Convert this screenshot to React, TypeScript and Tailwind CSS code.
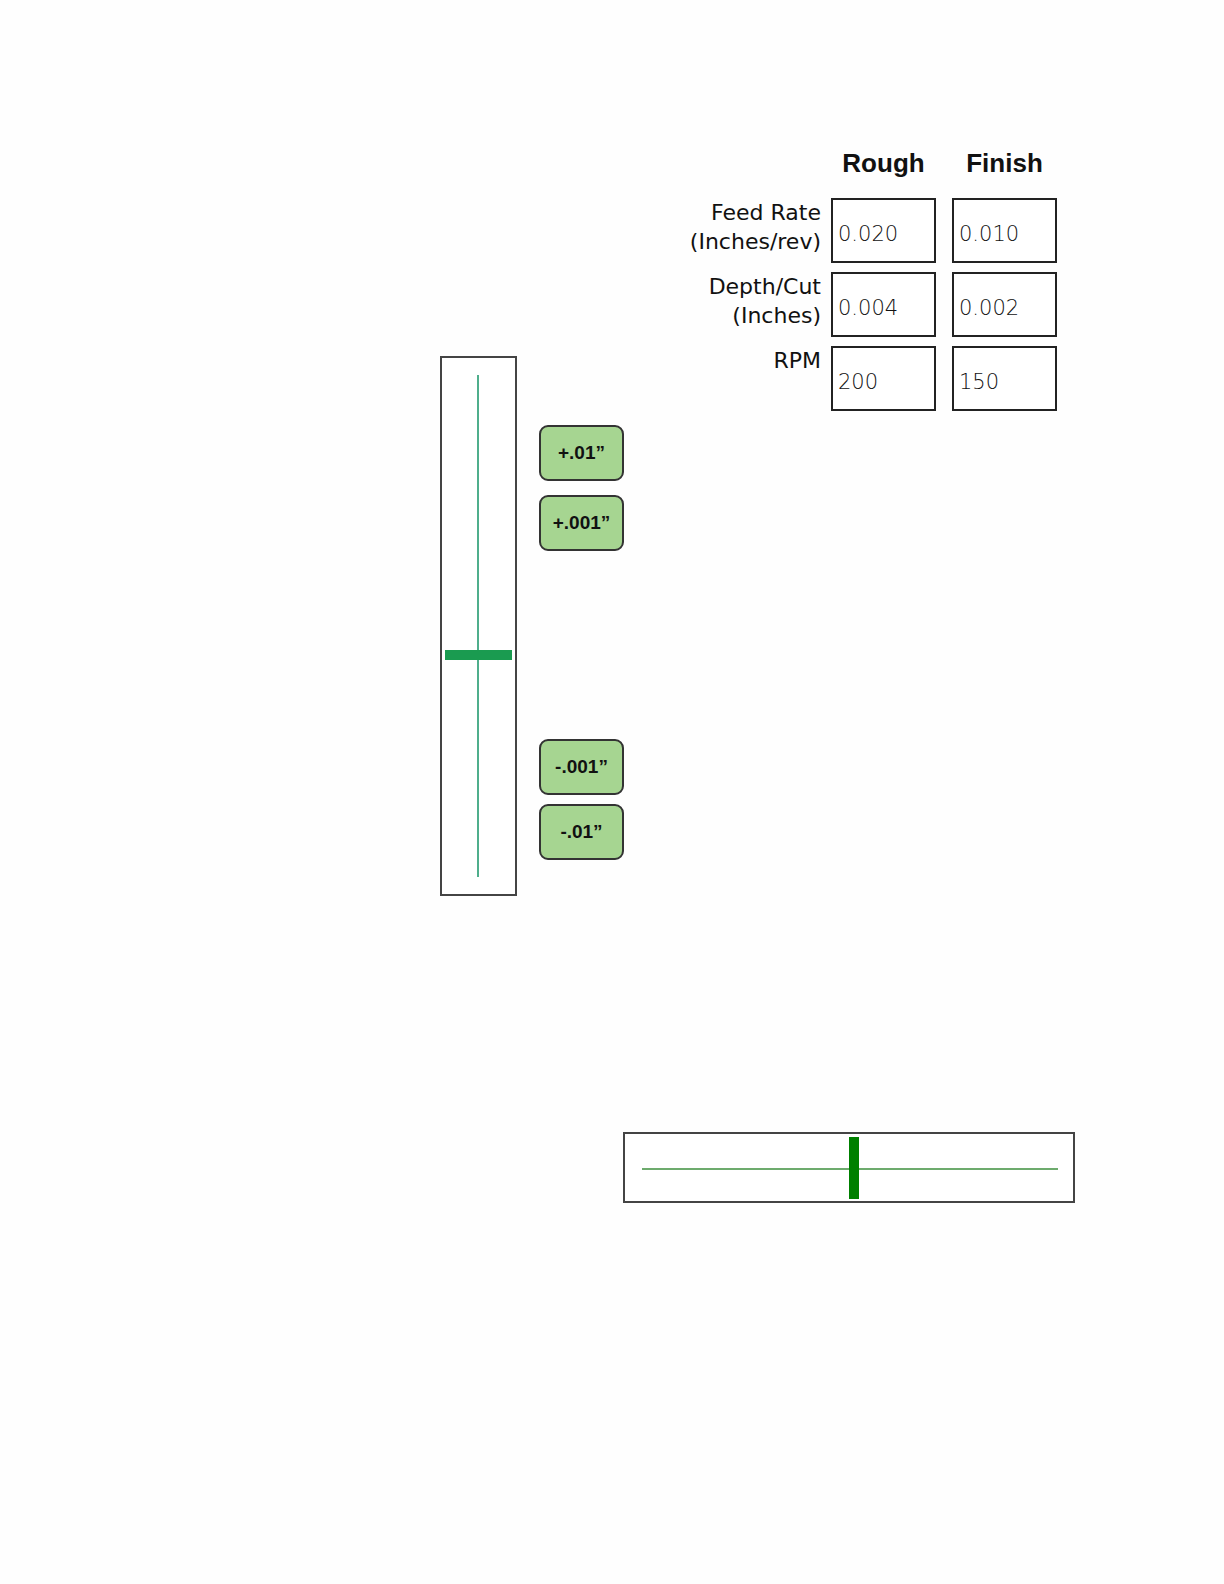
import React from "react";

const rows = [
  { label: ["Feed Rate", "(Inches/rev)"], rough: "0.020", finish: "0.010" },
  { label: ["Depth/Cut", "(Inches)"], rough: "0.004", finish: "0.002" },
  { label: ["RPM"], rough: "200", finish: "150" },
];

function StepButton({ label }: { label: string }) {
  return (
    <button className="w-[85px] h-[56px] rounded-[9px] border-2 border-[#333] bg-[#a6d591] text-[19px] font-bold text-[#111] font-['Liberation_Sans',Arial,sans-serif] flex items-center justify-center">
      {label}
    </button>
  );
}

function ValueBox({ value }: { value: string }) {
  return (
    <div className="w-[105px] h-[65px] border-2 border-[#222] bg-white flex items-center pl-[5px] pt-[9px] text-[21px] font-extralight text-[#111] font-['DejaVu_Sans',sans-serif]">
      {value}
    </div>
  );
}

export default function App() {
  return (
    <div className="min-h-[1584px] bg-[#fefefe]">
      <div className="flex items-start pl-[440px]">
        {/* vertical position slider */}
        <div className="mt-[356px] w-[77px] h-[540px] border-2 border-[#444] bg-white">
          <svg width="73" height="536" viewBox="0 0 73 536">
            <line x1="36" y1="17" x2="36" y2="519" stroke="#4fae8c" strokeWidth="2" />
            <rect x="3" y="292" width="67" height="10" fill="#1a9b50" />
          </svg>
        </div>

        <div className="ml-[22px] mt-[425px] flex flex-col">
          <StepButton label="+.01”" />
          <div className="mt-[14px]">
            <StepButton label="+.001”" />
          </div>
          <div className="mt-[188px]">
            <StepButton label="-.001”" />
          </div>
          <div className="mt-[9px]">
            <StepButton label="-.01”" />
          </div>
        </div>

        {/* cut settings */}
        <div className="ml-[47px] mt-[150px]">
          <div className="flex h-[26px] leading-[26px] text-[26px] font-bold text-[#111] font-['Liberation_Sans',Arial,sans-serif]">
            <div className="w-[150px]" />
            <div className="ml-[10px] w-[105px] text-center">Rough</div>
            <div className="ml-[16px] w-[105px] text-center">Finish</div>
          </div>
          <div className="mt-[22px] flex flex-col gap-[9px]">
            {rows.map((r) => (
              <div key={r.rough} className="flex items-start">
                <div className="w-[150px] text-right text-[22px] leading-[29px] text-[#111] font-['DejaVu_Sans',sans-serif]">
                  {r.label.map((l) => (
                    <div key={l}>{l}</div>
                  ))}
                </div>
                <div className="ml-[10px]">
                  <ValueBox value={r.rough} />
                </div>
                <div className="ml-[16px]">
                  <ValueBox value={r.finish} />
                </div>
              </div>
            ))}
          </div>
        </div>
      </div>

      {/* horizontal position slider */}
      <div className="mt-[236px] ml-[623px] w-[452px] h-[71px] border-2 border-[#444] bg-white">
        <svg width="448" height="67" viewBox="0 0 448 67">
          <line x1="17" y1="35" x2="433" y2="35" stroke="#3d8f3d" strokeWidth="1.5" />
          <rect x="224" y="3" width="10" height="62" fill="#008000" />
        </svg>
      </div>
    </div>
  );
}
